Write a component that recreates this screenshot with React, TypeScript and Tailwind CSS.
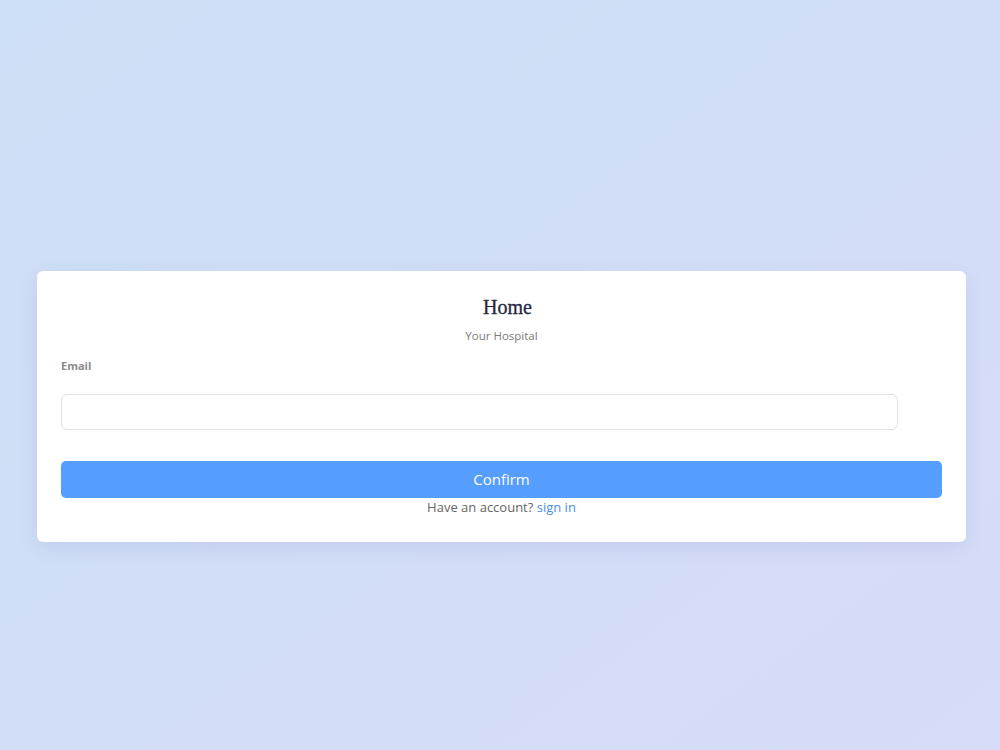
export default function App() {
  return (
    <div className="min-h-screen w-full bg-gradient-to-br from-[#cddff6] to-[#d7dcf8] px-[37px] pt-[271px] font-['Open_Sans',sans-serif]">
      <div className="w-[929px] rounded-md bg-white px-6 pt-[22px] pb-[26px] shadow-[0_6px_18px_rgba(120,140,190,0.18)]">
        <h1 className="pl-3 text-center font-['Liberation_Serif',serif] text-[20px] leading-7 text-[#1f2940] [-webkit-text-stroke:0.3px_#1f2940]">
          Home
        </h1>
        <p className="mt-[6px] text-center text-[11.5px] leading-[18px] text-[#7a7a7a]">Your Hospital</p>

        <label className="mt-[13px] block text-[11px] font-bold leading-4 text-[#8a8a8a]">Email</label>
        <input
          type="email"
          className="mt-[20px] block h-9 w-[95%] rounded-md border border-[#e2e2e2] bg-white px-3 text-sm outline-none"
        />

        <button className="mt-[31px] block h-[37px] w-full rounded-[5px] bg-[#559dff] text-[15px] text-white">
          Confirm
        </button>
        <p className="text-center text-[13px] leading-[18px] text-[#666666]">
          Have an account? <a href="#" className="text-[#4a90e2]">sign in</a>
        </p>
      </div>
    </div>
  )
}
